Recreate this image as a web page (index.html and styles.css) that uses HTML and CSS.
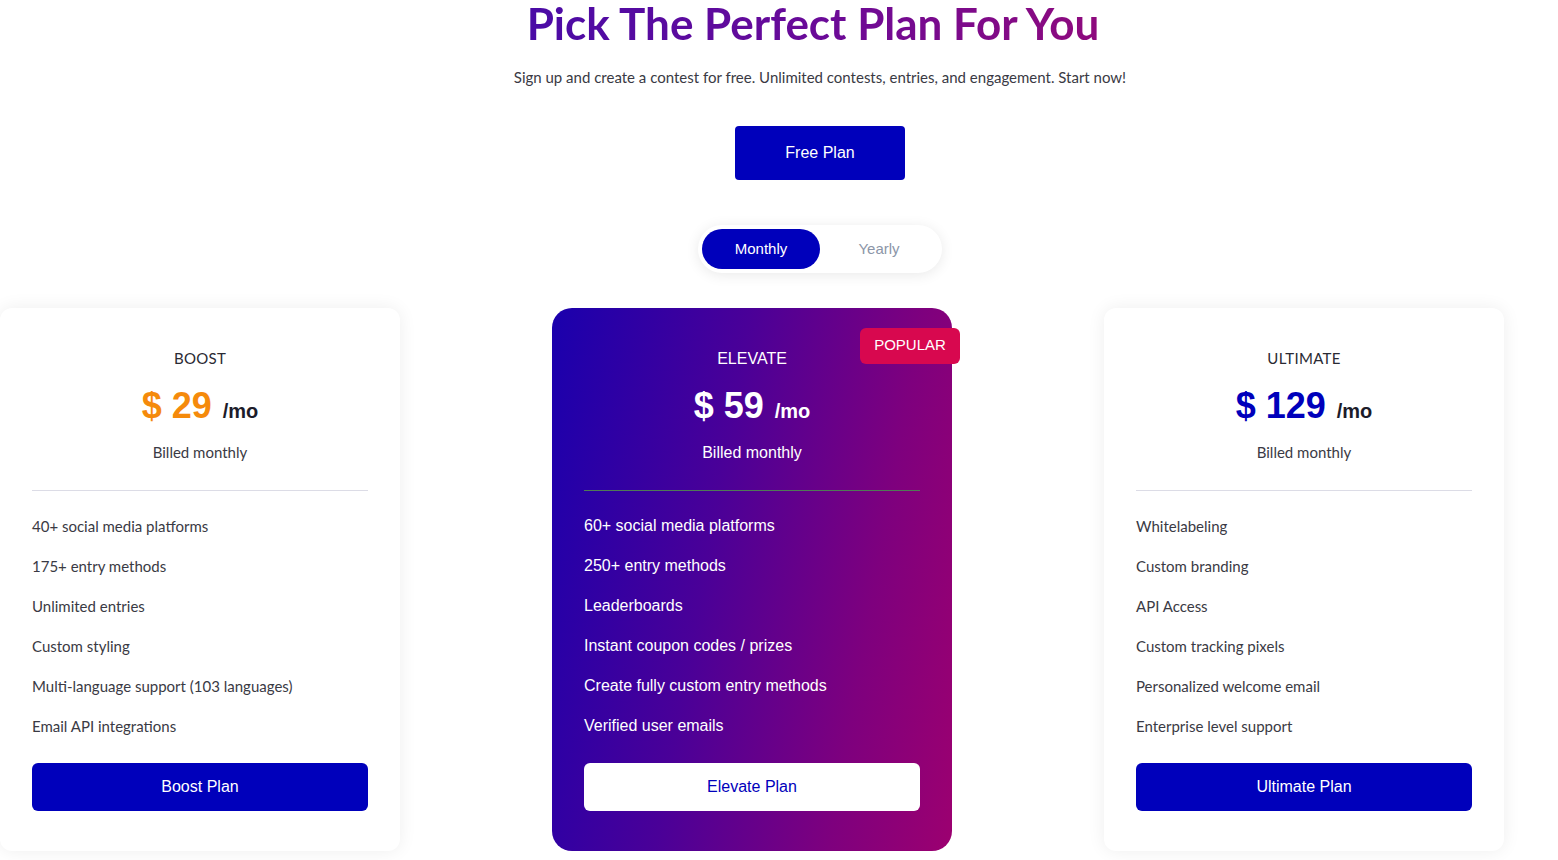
FILE: index.html
```html
<!DOCTYPE html>
<html lang="en">
<head>
<meta charset="utf-8">
<title>Pricing</title>
<link rel="stylesheet" href="styles.css">
</head>
<body>
<main class="page">
  <header class="intro">
    <h1 class="title">Pick The Perfect Plan For You</h1>
    <p class="subtitle">Sign up and create a contest for free. Unlimited contests, entries, and engagement. Start now!</p>
    <a class="free-btn" href="#">Free Plan</a>
    <div class="toggle">
      <span class="toggle-opt active">Monthly</span>
      <span class="toggle-opt">Yearly</span>
    </div>
  </header>

  <section class="plans">
    <article class="card">
      <h2 class="plan-name">BOOST</h2>
      <div class="price"><span class="amount orange">$ 29</span><span class="per">/mo</span></div>
      <p class="billed">Billed monthly</p>
      <hr class="divider">
      <ul class="features">
        <li>40+ social media platforms</li>
        <li>175+ entry methods</li>
        <li>Unlimited entries</li>
        <li>Custom styling</li>
        <li>Multi-language support (103 languages)</li>
        <li>Email API integrations</li>
      </ul>
      <a class="plan-btn" href="#">Boost Plan</a>
    </article>

    <article class="card featured">
      <span class="badge">POPULAR</span>
      <h2 class="plan-name">ELEVATE</h2>
      <div class="price"><span class="amount">$ 59</span><span class="per">/mo</span></div>
      <p class="billed">Billed monthly</p>
      <hr class="divider">
      <ul class="features">
        <li>60+ social media platforms</li>
        <li>250+ entry methods</li>
        <li>Leaderboards</li>
        <li>Instant coupon codes / prizes</li>
        <li>Create fully custom entry methods</li>
        <li>Verified user emails</li>
      </ul>
      <a class="plan-btn" href="#">Elevate Plan</a>
    </article>

    <article class="card">
      <h2 class="plan-name">ULTIMATE</h2>
      <div class="price"><span class="amount blue">$ 129</span><span class="per">/mo</span></div>
      <p class="billed">Billed monthly</p>
      <hr class="divider">
      <ul class="features">
        <li>Whitelabeling</li>
        <li>Custom branding</li>
        <li>API Access</li>
        <li>Custom tracking pixels</li>
        <li>Personalized welcome email</li>
        <li>Enterprise level support</li>
      </ul>
      <a class="plan-btn" href="#">Ultimate Plan</a>
    </article>
  </section>
</main>
</body>
</html>
```

FILE: styles.css
```css
* { box-sizing: border-box; }
html, body { margin: 0; padding: 0; background: #ffffff; }
body {
  font-family: Lato, "Open Sans", sans-serif;
  color: #333340;
  width: 1558px;
  height: 860px;
  overflow: hidden;
}
a { text-decoration: none; }

.page { display: flex; flex-direction: column; }

.intro {
  display: flex;
  flex-direction: column;
  align-items: center;
  padding-left: 82px;
}
.title {
  margin: 0;
  padding-right: 14px;
  font-size: 44px;
  line-height: 46px;
  font-weight: 700;
  letter-spacing: 0;
  background: linear-gradient(90deg, #4a0ba6 0%, #6a0a98 50%, #900a7c 100%);
  -webkit-background-clip: text;
  background-clip: text;
  color: transparent;
}
.subtitle {
  margin: 19px 0 0;
  font-size: 15px;
  line-height: 24px;
  color: #3a3a44;
}
.free-btn {
  margin-top: 37px;
  width: 170px;
  height: 54px;
  display: flex;
  align-items: center;
  justify-content: center;
  background: #0000bb;
  color: #fff;
  border-radius: 4px;
  font-family: "Liberation Sans", Arial, sans-serif;
  font-size: 16px;
}
.toggle {
  margin-top: 45px;
  width: 244px;
  height: 48px;
  padding: 4px;
  display: flex;
  background: #fff;
  border-radius: 24px;
  box-shadow: 0 2px 14px rgba(0, 0, 0, 0.09);
}
.toggle-opt {
  width: 118px;
  display: flex;
  align-items: center;
  justify-content: center;
  padding-bottom: 2px;
  border-radius: 20px;
  font-family: "Liberation Sans", Arial, sans-serif;
  font-size: 15px;
  color: #8c96a8;
}
.toggle-opt.active { background: #0000bb; color: #fff; }

.plans {
  margin-top: 35px;
  display: flex;
  gap: 152px;
}
.card {
  position: relative;
  width: 400px;
  height: 543px;
  padding: 40px 32px 40px 32px;
  background: #fff;
  border-radius: 12px;
  box-shadow: 0 0 18px rgba(0, 0, 0, 0.07);
  display: flex;
  flex-direction: column;
  align-items: stretch;
  text-align: center;
}
.plan-name {
  margin: 0;
  font-size: 15px;
  line-height: 20px;
  font-weight: 400;
  letter-spacing: 0.3px;
  color: #2a2a33;
}
.price {
  margin-top: 14px;
  height: 48px;
  display: flex;
  justify-content: center;
  align-items: baseline;
  gap: 11px;
  font-family: "Liberation Sans", Arial, sans-serif;
  font-weight: 700;
  line-height: 48px;
}
.amount { font-size: 36px; }
.amount.orange { color: #f58a0b; }
.amount.blue { color: #0000bb; }
.per { font-size: 20px; color: #1c1c2a; }
.billed {
  margin: 12px 0 0;
  font-size: 15px;
  line-height: 20px;
  color: #3a3a44;
}
.divider {
  margin: 28px 0 0;
  border: 0;
  height: 1px;
  flex-shrink: 0;
  background: #dcdce6;
}
.features {
  list-style: none;
  margin: 15px 0 0;
  padding: 0;
  text-align: left;
}
.features li {
  height: 40px;
  line-height: 40px;
  font-size: 15px;
  color: #3a3a44;
}
.plan-btn {
  margin-top: 17px;
  height: 48px;
  flex-shrink: 0;
  display: flex;
  align-items: center;
  justify-content: center;
  background: #0000bb;
  color: #fff;
  border-radius: 6px;
  font-family: "Liberation Sans", Arial, sans-serif;
  font-size: 16px;
}

.card.featured {
  border-radius: 20px;
  background: linear-gradient(100deg, #1a00ad 0%, #4a0098 40%, #7e007e 75%, #9c0070 100%);
  box-shadow: none;
  color: #fff;
}
.featured .plan-name,
.featured .billed,
.featured .features li,
.featured .per,
.featured .amount {
  color: #fff;
  font-family: "Liberation Sans", Arial, sans-serif;
}
.featured .plan-name { font-size: 16px; letter-spacing: 0; line-height: 22px; margin-bottom: -2px; }
.featured .billed { font-size: 16px; line-height: 22px; margin-bottom: -2px; }
.featured .features li { font-size: 16px; }
.featured .divider { background: #4f7a55; }
.featured .plan-btn { background: #fff; color: #0000bb; }

.badge {
  position: absolute;
  top: 20px;
  right: -8px;
  width: 100px;
  height: 36px;
  display: flex;
  align-items: center;
  justify-content: center;
  padding-bottom: 3px;
  background: #d8084f;
  color: #fff;
  border-radius: 6px;
  font-family: "Liberation Sans", Arial, sans-serif;
  font-size: 15px;
}
```
